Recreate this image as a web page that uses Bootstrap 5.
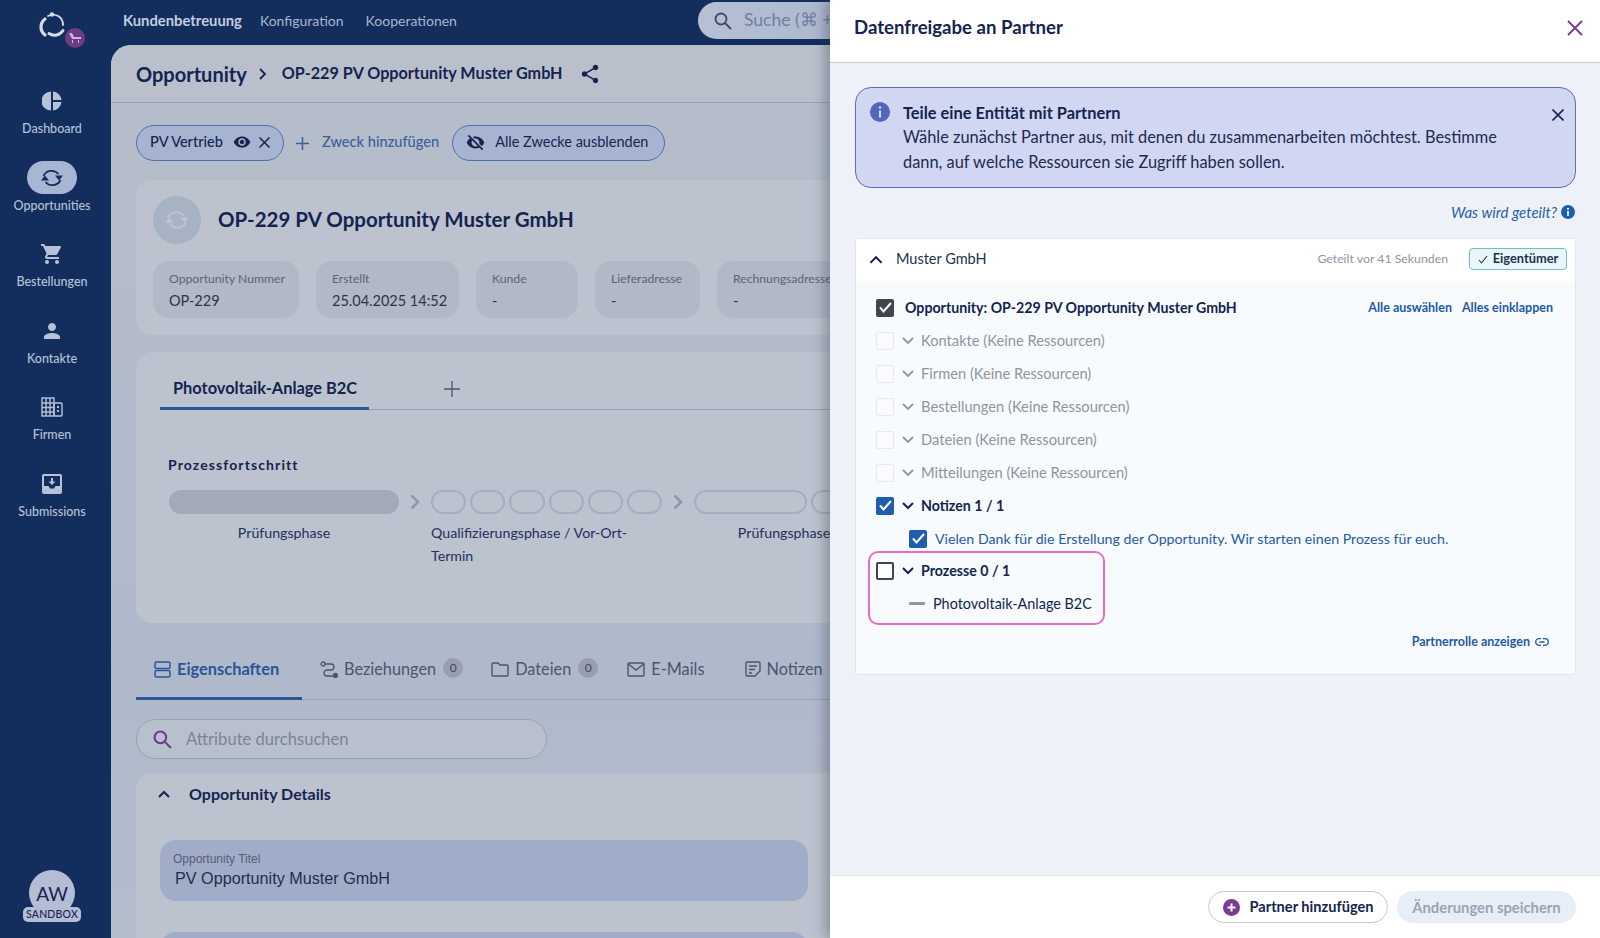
<!DOCTYPE html>
<html lang="de"><head><meta charset="utf-8"><title>Datenfreigabe</title>
<link href="https://cdn.jsdelivr.net/npm/bootstrap@5.3.0/dist/css/bootstrap.min.css" rel="stylesheet">
<style>
html,body{height:100%;overflow:hidden}
body{font-family:"Lato","Liberation Sans",sans-serif;color:#14244f;background:#132e5c;font-size:15px}
.shell{height:938px;position:relative;overflow:hidden}
.side{width:111px;flex:none;background:#132e5c;color:#b7c2d8;height:938px;padding-right:7px}
.logo-wrap{height:84.5px;position:relative}
.logo-wrap svg.lg{position:absolute;left:38px;top:11px}
.logo-dot{position:absolute;left:65px;top:28px;width:20px;height:20px;border-radius:50%;background:#6f3b84;display:flex;align-items:center;justify-content:center}
.side-item{height:76.5px;text-align:center;font-size:12.5px;line-height:16px;font-weight:500;white-space:nowrap}
.side-ic{height:33px;width:50px;margin:0 auto 3.500px;display:flex;align-items:center;justify-content:center;border-radius:17px}
.side-ic.on{background:#a9b6d3;color:#132e5c}
.ava{position:relative;height:52px;margin-bottom:16px}
.ava-c{width:46px;height:46px;border-radius:50%;background:#b3bdd5;margin:0 auto;color:#14244f;font-size:19px;text-align:center;line-height:47px}
.ava-b{position:absolute;left:23px;top:37px;width:58px;height:15px;border-radius:5px;background:#b3bdd5;color:#14244f;font-size:10.500px;line-height:15px;text-align:center;font-weight:500;letter-spacing:.2px}
.topb{height:45px;flex:none;color:#b7c2d8;padding-bottom:5px}
.topb a{text-decoration:none;color:#aab6cd;font-size:14px}
.topb a.act{color:#c3cde0;font-weight:700;font-size:14.8px}
.topb a.k1{margin-left:2px}
.topb a.k2{margin-left:6px}
.srch{margin-left:225px;width:300px;height:37px;margin-top:1px;border-radius:19px;background:linear-gradient(90deg,#b6bfd3,#a3afcb);color:#6f7f9f;font-size:17.6px;padding-left:16px;gap:12px;white-space:nowrap}
.panel{flex:1;min-height:0;background:linear-gradient(#b6bdca,#afb9cb 70%,#b3bccb);border-top-left-radius:20px;overflow:hidden}
.phead{height:58px;background:#b9c0cc;border-bottom:1px solid #98a1b0;padding-left:25px}
.phead .h1x{font-size:20px;font-weight:700;color:#14244f}
.phead .h2x{font-size:16.2px;font-weight:700;color:#14244f}
.crumb{margin:0 10px 0 11px}
.pbody{padding:22px 25px 0}
.chip{height:36px;border:1.5px solid #4d70aa;background:#a6b4d2;border-radius:18px;font-size:14.5px;font-weight:500;white-space:nowrap;padding:0 13px 2px}
.chip2{width:213px;gap:10px;font-weight:400}
.plus2{margin-left:12px}
.addlink{color:#3b5f9a;font-size:14.6px;font-weight:500;white-space:nowrap;margin:-2px 13px 0 13px}
.blk{background:#bcc3cf;border-radius:16px}
.c1{margin-top:19px;height:155px;padding:16px 17px}
.rnd{width:48px;height:48px;border-radius:50%;background:#a7b3c2;color:#bcc6d2;display:flex;align-items:center;justify-content:center}
.ttl{font-size:20.5px;font-weight:700;margin:-2px 0 0 17px;color:#14244f}
.infos{margin-top:17px;gap:17px}
.info{height:57px;background:#b2b8c5;border-radius:16px;padding:9px 16px;flex:none;white-space:nowrap}
.info .l{font-size:12.2px;color:#5b6478;line-height:18px}
.info .v{font-size:14.5px;color:#2a3550;line-height:24px;margin-top:1px}
.c2{margin-top:17px;height:271px;padding:16px 0 0 24px}
.tabrow{border-bottom:1px solid #99a2b1;height:42px}
.tab1{width:209px;padding-left:13px;font-size:16.4px;font-weight:700;height:42px;line-height:40px;border-bottom:3px solid #2c5596;margin-bottom:-1px}
.plusx{margin:13px 0 0 75px}
.procT{font-size:14px;font-weight:700;letter-spacing:1.1px;margin:45px 0 0 -16px;line-height:20px;padding-left:24px}
.steps{margin:15px 0 0 9px;align-items:flex-start}
.pill{height:24px;border-radius:12px;border:2px solid #a6adbb;flex:none}
.pill.flex-fill{flex:1 1 0}
.pill.fill{background:#a2a9b8;border:0}
.stepL{font-size:14.2px;line-height:23px;margin-top:7px;color:#22305a}
.chev{width:32px;flex:none;height:24px;display:flex;align-items:center;justify-content:center;color:#8f97a6}
.tabs2{margin-top:27px;height:50px;border-bottom:1px solid #98a1b1;color:#4b566e;font-size:16.300px;white-space:nowrap}
.tb{height:50px;gap:6px;padding-bottom:11px;flex:none}
.tb.act{width:166px;padding-left:18px;color:#2c5596;font-weight:700;font-size:16.4px;border-bottom:3px solid #2c5596;margin-bottom:-1px;padding-bottom:8px}
.cnt{width:20px;height:20px;border-radius:50%;background:#979fb0;font-size:12px;display:flex;align-items:center;justify-content:center;color:#3d465a;margin:-3px 0 0 1px}
.ser{margin-top:19px;width:411px;height:40px;border:1px solid #99a2b4;border-radius:20px;padding-left:16px;gap:14px;font-size:16.6px;color:#7b8497;background:#b9c0cd}
.c3{margin-top:14px;height:400px;padding:12px 24px 12px 22px}
.c3h{font-size:16px;font-weight:700;gap:19px;height:18px}
.fld{width:648px;height:61px;background:#a1acc8;border-radius:16px;margin:37px 0 0 2px;padding:10px 13px}
.fld .l{font-family:"Liberation Sans",sans-serif;font-size:12px;color:#535e78;line-height:18px}
.fld .v{font-family:"Liberation Sans",sans-serif;font-size:16.2px;color:#222e4e;line-height:20px;padding-left:2px}
.fld2{margin-top:31px}
.draw{position:absolute;right:0;top:0;bottom:0;width:770px;background:#eef2f8;box-shadow:-5px 0 12px rgba(40,50,70,.35)}
.dh{height:63px;background:#fff;border-bottom:1px solid #c8ced8;padding:0 17px 6px 24px;flex:none}
.dh .t{font-size:18.6px;font-weight:700;color:#14244f}
.db{flex:1;padding:24px 24px 0 25px}
.al{height:101px;border:1.5px solid #5d6eb4;background:#d1d7f3;border-radius:16px;padding:12.500px 11px 0 14px;font-size:16.4px;line-height:24.6px;color:#1c2a50}
.al b{font-weight:700;color:#14244f}
.alic{flex:none;margin:1px 13px 0 0}
.alx{flex:none;margin:8px 0 0 24px}
.was{font-style:italic;color:#2a5ea8;font-size:15px;margin-top:14px;height:20px;gap:4px;padding-right:1px}
.pc{margin-top:16px;height:437px;border:1px solid #e1e6ee;border-radius:3px;background:#f8fbfe}
.pch{height:42px;background:#fff;padding:0 8px 2px 13px}
.pch .n{font-size:14.5px;color:#24304f;margin-left:13px}
.pch .g{font-size:12.3px;color:#8d95a3;margin-right:21px}
.own{height:22px;width:98px;border:1px solid #74bccb;border-radius:4px;background:#e8f6fa;font-size:12.8px;font-weight:700;gap:5px;color:#24304f}
.pcb{padding:10px 21px 0 20px}
.rw{height:33px;display:flex;align-items:center;font-size:14.7px;white-space:nowrap}
.cb{width:18px;height:18px;flex:none;border-radius:2px;display:flex;align-items:center;justify-content:center}
.cb.dk{background:#3f4650}
.cb.bl{background:#1e5db0}
.cb.off{background:#fafbfc;border:1.5px solid #e6e9ee}
.cb.emp{background:#fff;border:2px solid #3f4650}
.rw .ar{width:27px;flex:none;display:flex;justify-content:flex-end;padding-right:7px}
.rw.dis{color:#8d95a3}
.rw.on,.strong{font-weight:700;color:#14244f;font-size:14.2px}
.strong{margin-left:11px}
.sub{padding-left:33px;color:#1f5aa3;font-size:14.2px}
.lnk{font-size:12.5px;color:#1f5aa3;font-weight:700}
.lnkrow{margin-top:2px}
.lnkrow.a1{margin-left:auto}
.lnkrow.a2{margin-left:10px;margin-right:1px}
.hl{margin:-4px 0 -4px -8px;width:237px;height:74px;border:2px solid #e96bc5;border-radius:10px;padding:1px 0 0 6px}
.hl .pv{font-size:14.4px}
.dsh{width:16px;height:3px;background:#8d97a6;margin:0 8px 0 33px;border-radius:1px;flex:none}
.prol{margin-top:11px;padding-right:5px;height:20px;gap:5px}
.df{height:63px;background:#fff;border-top:1px solid #e3e7ee;padding:0 24px 0 0;gap:9px;flex:none}
.bt1{height:32px;width:180px;border:1px solid #c5cad2;border-radius:16px;font-size:14.6px;font-weight:700;gap:10px;color:#14244f;background:#fff;padding:0}
.bt2{height:32px;width:179px;border-radius:16px;font-size:14.8px;font-weight:700;color:#9aa3b5;background:#e8eef7;border:0;padding:0}
</style></head>
<body>
<div class="shell d-flex">
 <aside class="side d-flex flex-column">
  <div class="logo-wrap">
   <svg class="lg" width="29" height="28" viewBox="0 0 29 28" fill="none" stroke="#d5dbe8" stroke-linecap="round"><path d="M10 5A10 10 0 0 1 25 14" stroke-width="1.800"/><path d="M7 8A10 10 0 0 0 7 24" stroke-width="3.200"/><path d="M11 22.500a10 10 0 0 0 14-3" stroke-width="3"/><circle cx="14" cy="3.500" r="2.200" fill="#d5dbe8" stroke="none"/></svg>
   <div class="logo-dot"><svg width="14" height="12" viewBox="0 0 14 12" fill="#c8b6d4"><path d="M1 1h3l2 4h7v2H4zM4 8h1v3H4zM10 8h1v3h-1z"/></svg></div>
  </div>
  <div class="side-item"><div class="side-ic"><svg width="20" height="20" viewBox="0 0 20 20" fill="currentColor"><path d="M9 .5v19A9.500 9.500 0 0 1 9 .5zM11 .5A9.500 9.500 0 0 1 19.500 9H11zM11 11h8.500A9.500 9.500 0 0 1 11 19.500z"/></svg></div>Dashboard</div>
  <div class="side-item"><div class="side-ic on"><svg width="24" height="20" viewBox="0 0 24 20" fill="none" stroke="currentColor" stroke-width="1.800"><path d="M3.500 8A9 9 0 0 1 18.500 6"/><path d="M20.500 12A9 9 0 0 1 5.500 14"/><path d="M15 7.500h8l-4 5zM1 12.500h8l-4-5z" fill="currentColor" stroke="none"/></svg></div>Opportunities</div>
  <div class="side-item"><div class="side-ic"><svg width="24" height="24" viewBox="0 0 24 24" fill="currentColor"><path d="M7 18c-1.100 0-1.990.9-1.990 2S5.900 22 7 22s2-.9 2-2-.9-2-2-2zM1 2v2h2l3.600 7.590-1.350 2.450c-.16.28-.25.61-.25.96 0 1.100.9 2 2 2h12v-2H7.420c-.14 0-.25-.11-.25-.25l.03-.12.9-1.630h7.450c.75 0 1.410-.41 1.750-1.030l3.580-6.490c.08-.14.12-.31.12-.48 0-.55-.45-1-1-1H5.210l-.94-2H1zm16 16c-1.100 0-1.990.9-1.990 2s.89 2 1.990 2 2-.9 2-2-.9-2-2-2z"/></svg></div>Bestellungen</div>
  <div class="side-item"><div class="side-ic"><svg width="24" height="24" viewBox="0 0 24 24" fill="currentColor"><path d="M12 12c2.210 0 4-1.790 4-4s-1.790-4-4-4-4 1.790-4 4 1.790 4 4 4zm0 2c-2.670 0-8 1.340-8 4v2h16v-2c0-2.660-5.330-4-8-4z"/></svg></div>Kontakte</div>
  <div class="side-item"><div class="side-ic"><svg width="22" height="20" viewBox="0 0 22 20" fill="none" stroke="currentColor" stroke-width="1.400"><rect x="1" y="1" width="12" height="18"/><rect x="13" y="6" width="8" height="13" rx="1"/><path d="M1 6h12M1 10.500h12M1 15h12M5 1v18M9 1v18"/><path d="M16 10h2M16 14h2" stroke-width="2"/></svg></div>Firmen</div>
  <div class="side-item"><div class="side-ic"><svg width="20" height="20" viewBox="0 0 20 20"><path fill="currentColor" d="M2 0h16a2 2 0 0 1 2 2v16a2 2 0 0 1-2 2H2a2 2 0 0 1-2-2V2a2 2 0 0 1 2-2z"/><path fill="#132e5c" d="M2 2h16v10h-4.500l-1.500 2.500H8L6.500 12H2z"/><path fill="currentColor" d="M9 4h2v3.500h2.500L10 11 6.500 7.500H9z"/></svg></div>Submissions</div>
  <div class="ava mt-auto"><div class="ava-c">AW</div><div class="ava-b">SANDBOX</div></div>
 </aside>
 <div class="flex-grow-1 d-flex flex-column" style="min-width:0">
  <div class="topb d-flex align-items-center ps-2 gap-3">
    <a class="act ms-1" href="#">Kundenbetreuung</a><a href="#" class="k1">Konfiguration</a><a href="#" class="k2">Kooperationen</a>
    <div class="srch d-flex align-items-center"><svg width="18" height="18" viewBox="0 0 18 18" fill="none" stroke="#3a4a6c" stroke-width="1.800"><circle cx="7" cy="7" r="5.500"/><path d="M11 11l6 6"/></svg><span>Suche (⌘ +</span></div>
  </div>
  <main class="panel">
   <div class="phead d-flex align-items-center"><span class="h1x">Opportunity</span><svg class="crumb" width="10" height="12" viewBox="0 0 10 12" fill="none" stroke="#14244f" stroke-width="1.800"><path d="M2 1l5 5-5 5"/></svg><span class="h2x ms-1">OP-229 PV Opportunity Muster GmbH</span><svg class="ms-3" width="22" height="22" viewBox="0 0 24 24" fill="#14244f"><path d="M18 16.080c-.76 0-1.440.3-1.960.77L8.910 12.700c.05-.23.09-.46.09-.7s-.04-.47-.09-.7l7.050-4.110c.54.5 1.250.81 2.040.81 1.660 0 3-1.340 3-3s-1.340-3-3-3-3 1.340-3 3c0 .24.04.47.09.7L8.040 9.810C7.500 9.310 6.790 9 6 9c-1.660 0-3 1.340-3 3s1.340 3 3 3c.79 0 1.500-.31 2.040-.81l7.120 4.160c-.05.21-.08.43-.08.65 0 1.610 1.310 2.920 2.920 2.920 1.610 0 2.920-1.310 2.920-2.920s-1.310-2.920-2.920-2.920z"/></svg></div>
   <div class="pbody">
    <div class="d-flex align-items-center">
     <div class="chip d-flex align-items-center" style="width:148px">PV Vertrieb<svg class="ms-auto" width="18" height="18" viewBox="0 0 24 24" fill="#14244f"><path d="M12 4.500C7 4.500 2.730 7.610 1 12c1.730 4.390 6 7.500 11 7.500s9.270-3.110 11-7.500c-1.730-4.390-6-7.500-11-7.500zM12 17c-2.760 0-5-2.240-5-5s2.240-5 5-5 5 2.240 5 5-2.240 5-5 5zm0-8c-1.660 0-3 1.340-3 3s1.340 3 3 3 3-1.340 3-3-1.340-3-3-3z"/></svg><svg class="ms-2" width="11" height="11" viewBox="0 0 11 11" stroke="#14244f" stroke-width="1.500"><path d="M.5.5l10 10M10.500.5l-10 10"/></svg></div>
     <svg class="plus2" width="13" height="13" viewBox="0 0 13 13" stroke="#3b5f9a" stroke-width="1.500"><path d="M6.500 0v13M0 6.500h13"/></svg>
     <span class="addlink">Zweck hinzufügen</span>
     <div class="chip chip2 d-flex align-items-center"><svg width="19" height="19" viewBox="0 0 24 24" fill="#14244f"><path d="M12 4.500C7 4.500 2.730 7.610 1 12c1.730 4.390 6 7.500 11 7.500s9.270-3.110 11-7.500c-1.730-4.390-6-7.500-11-7.500zM12 17c-2.760 0-5-2.240-5-5s2.240-5 5-5 5 2.240 5 5-2.240 5-5 5z"/><path d="M3 2l19 19" stroke="#a6b4d2" stroke-width="3.500"/><path d="M3 3l18 18" stroke="#14244f" stroke-width="2"/></svg>Alle Zwecke ausblenden</div>
    </div>
    <section class="blk c1">
     <div class="d-flex align-items-center"><div class="rnd"><svg width="26" height="22" viewBox="0 0 24 20" fill="none" stroke="currentColor" stroke-width="1.800"><path d="M3.500 8A9 9 0 0 1 18.500 6"/><path d="M20.500 12A9 9 0 0 1 5.500 14"/><path d="M15 7.500h8l-4 5zM1 12.500h8l-4-5z" fill="currentColor" stroke="none"/></svg></div><div class="ttl">OP-229 PV Opportunity Muster GmbH</div></div>
     <div class="infos d-flex">
      <div class="info" style="width:146px"><div class="l">Opportunity Nummer</div><div class="v">OP-229</div></div>
      <div class="info" style="width:143px"><div class="l">Erstellt</div><div class="v">25.04.2025 14:52</div></div>
      <div class="info" style="width:102px"><div class="l">Kunde</div><div class="v">-</div></div>
      <div class="info" style="width:105px"><div class="l">Lieferadresse</div><div class="v">-</div></div>
      <div class="info" style="width:150px"><div class="l">Rechnungsadresse</div><div class="v">-</div></div>
     </div>
    </section>
    <section class="blk c2">
     <div class="tabrow d-flex"><div class="tab1">Photovoltaik-Anlage B2C</div><svg class="plusx" width="16" height="16" viewBox="0 0 16 16" stroke="#4b566e" stroke-width="1.300"><path d="M8 0v16M0 8h16"/></svg></div>
     <div class="procT">Prozessfortschritt</div>
     <div class="steps d-flex">
      <div style="width:230px"><div class="pill fill"></div><div class="stepL text-center">Prüfungsphase</div></div>
      <div class="chev"><svg width="10" height="16" viewBox="0 0 10 16" fill="none" stroke="currentColor" stroke-width="2.500"><path d="M1.500 1.500L8 8l-6.500 6.500"/></svg></div>
      <div style="width:231px"><div class="d-flex gap-1"><div class="pill flex-fill"></div><div class="pill flex-fill"></div><div class="pill flex-fill"></div><div class="pill flex-fill"></div><div class="pill flex-fill"></div><div class="pill flex-fill"></div></div><div class="stepL">Qualifizierungsphase / Vor-Ort-Termin</div></div>
      <div class="chev"><svg width="10" height="16" viewBox="0 0 10 16" fill="none" stroke="currentColor" stroke-width="2.500"><path d="M1.500 1.500L8 8l-6.500 6.500"/></svg></div>
      <div style="width:180px"><div class="d-flex gap-1"><div class="pill" style="width:113px"></div><div class="pill" style="width:80px"></div></div><div class="stepL text-center">Prüfungsphase</div></div>
     </div>
    </section>
    <div class="tabs2 d-flex align-items-center">
     <div class="tb act d-flex align-items-center"><svg width="17" height="17" viewBox="0 0 17 17" fill="none" stroke="#2c5596" stroke-width="1.500"><rect x="1" y="1" width="15" height="6.500" rx="1.500"/><rect x="1" y="9.500" width="15" height="6.500" rx="1.500"/></svg>Eigenschaften</div>
     <div class="tb d-flex align-items-center" style="margin-left:18px"><svg width="18" height="17" viewBox="0 0 18 17" fill="none" stroke="#4b566e" stroke-width="1.300"><circle cx="3" cy="3" r="2"/><path d="M5 3h6a3 3 0 0 1 0 6H7a3 3 0 0 0 0 6h7"/><circle cx="15.500" cy="14.500" r="2" fill="#4b566e"/></svg>Beziehungen<div class="cnt">0</div></div>
     <div class="tb d-flex align-items-center" style="margin-left:28px"><svg width="18" height="16" viewBox="0 0 18 16" fill="none" stroke="#4b566e" stroke-width="1.400"><path d="M1 3a1 1 0 0 1 1-1h5l2 2h7a1 1 0 0 1 1 1v9a1 1 0 0 1-1 1H2a1 1 0 0 1-1-1z"/></svg>Dateien<div class="cnt">0</div></div>
     <div class="tb d-flex align-items-center" style="margin-left:29px"><svg width="18" height="15" viewBox="0 0 18 15" fill="none" stroke="#4b566e" stroke-width="1.400"><rect x="1" y="1" width="16" height="13" rx="1"/><path d="M1.500 2l7.500 6 7.500-6"/></svg>E-Mails</div>
     <div class="tb d-flex align-items-center" style="margin-left:40px"><svg width="16" height="16" viewBox="0 0 16 16" fill="none" stroke="#4b566e" stroke-width="1.400"><path d="M2 1h12a1 1 0 0 1 1 1v8l-5 5H2a1 1 0 0 1-1-1V2a1 1 0 0 1 1-1zM4 5h8M4 8.500h6M4 12h3"/></svg>Notizen<div class="cnt"></div></div>
    </div>
    <div class="ser d-flex align-items-center"><svg width="19" height="19" viewBox="0 0 18 18" fill="none" stroke="#6b3a88" stroke-width="1.900"><circle cx="7" cy="7" r="5.500"/><path d="M11 11l6 6"/></svg>Attribute durchsuchen</div>
    <section class="blk c3">
     <div class="c3h d-flex align-items-center"><svg width="12" height="8" viewBox="0 0 12 8" fill="none" stroke="#14244f" stroke-width="2"><path d="M1 7l5-5 5 5"/></svg>Opportunity Details</div>
     <div class="fld"><div class="l">Opportunity Titel</div><div class="v">PV Opportunity Muster GmbH</div></div>
     <div class="fld fld2"></div>
    </section>
   </div>
  </main>
 </div>
 <aside class="draw d-flex flex-column">
  <div class="dh d-flex align-items-center justify-content-between"><span class="t">Datenfreigabe an Partner</span><svg width="16" height="16" viewBox="0 0 16 16" stroke="#7b3a8e" stroke-width="1.800"><path d="M1 1l14 14M15 1L1 15"/></svg></div>
  <div class="db">
   <div class="al d-flex">
    <svg class="alic" width="20" height="20" viewBox="0 0 20 20"><circle cx="10" cy="10" r="10" fill="#5068b5"/><circle cx="10" cy="5.500" r="1.300" fill="#d1d7f3"/><rect x="9" y="8.500" width="2" height="7" fill="#d1d7f3"/></svg>
    <div class="flex-grow-1"><b>Teile eine Entität mit Partnern</b><br>Wähle zunächst Partner aus, mit denen du zusammenarbeiten möchtest. Bestimme dann, auf welche Ressourcen sie Zugriff haben sollen.</div>
    <svg class="alx" width="12" height="12" viewBox="0 0 12 12" stroke="#14244f" stroke-width="1.600"><path d="M.5.5l11 11M11.500.5l-11 11"/></svg>
   </div>
   <div class="was d-flex align-items-center justify-content-end">Was wird geteilt?<svg width="14" height="14" viewBox="0 0 20 20"><circle cx="10" cy="10" r="10" fill="#1e5db0"/><circle cx="10" cy="5.500" r="1.500" fill="#fff"/><rect x="8.800" y="8.500" width="2.400" height="7" fill="#fff"/></svg></div>
   <div class="pc">
    <div class="pch d-flex align-items-center"><svg width="14" height="9" viewBox="0 0 12 8" fill="none" stroke="#14244f" stroke-width="1.800"><path d="M1 7l5-5 5 5"/></svg><span class="n">Muster GmbH</span><span class="g ms-auto">Geteilt vor 41 Sekunden</span><div class="own d-flex align-items-center justify-content-center"><svg width="10" height="9" viewBox="0 0 10 9" fill="none" stroke="#24304f" stroke-width="1.100"><path d="M1 5l2.500 3L9 1"/></svg>Eigentümer</div></div>
    <div class="pcb">
     <div class="rw"><span class="cb dk"><svg width="13" height="11" viewBox="0 0 13 11" fill="none" stroke="#fff" stroke-width="2"><path d="M1 5.500l3.500 4L12 1"/></svg></span><span class="strong">Opportunity: OP-229 PV Opportunity Muster GmbH</span><a class="lnk lnkrow a1 text-decoration-none" href="#">Alle auswählen</a><a class="lnk lnkrow a2 text-decoration-none" href="#">Alles einklappen</a></div>
     <div class="rw dis"><span class="cb off"></span><span class="ar"><svg width="12" height="8" viewBox="0 0 12 8" fill="none" stroke="#8d95a3" stroke-width="1.800"><path d="M1 1l5 5 5-5"/></svg></span>Kontakte (Keine Ressourcen)</div>
     <div class="rw dis"><span class="cb off"></span><span class="ar"><svg width="12" height="8" viewBox="0 0 12 8" fill="none" stroke="#8d95a3" stroke-width="1.800"><path d="M1 1l5 5 5-5"/></svg></span>Firmen (Keine Ressourcen)</div>
     <div class="rw dis"><span class="cb off"></span><span class="ar"><svg width="12" height="8" viewBox="0 0 12 8" fill="none" stroke="#8d95a3" stroke-width="1.800"><path d="M1 1l5 5 5-5"/></svg></span>Bestellungen (Keine Ressourcen)</div>
     <div class="rw dis"><span class="cb off"></span><span class="ar"><svg width="12" height="8" viewBox="0 0 12 8" fill="none" stroke="#8d95a3" stroke-width="1.800"><path d="M1 1l5 5 5-5"/></svg></span>Dateien (Keine Ressourcen)</div>
     <div class="rw dis"><span class="cb off"></span><span class="ar"><svg width="12" height="8" viewBox="0 0 12 8" fill="none" stroke="#8d95a3" stroke-width="1.800"><path d="M1 1l5 5 5-5"/></svg></span>Mitteilungen (Keine Ressourcen)</div>
     <div class="rw on"><span class="cb bl"><svg width="13" height="11" viewBox="0 0 13 11" fill="none" stroke="#fff" stroke-width="2"><path d="M1 5.500l3.500 4L12 1"/></svg></span><span class="ar"><svg width="12" height="8" viewBox="0 0 12 8" fill="none" stroke="#14244f" stroke-width="2"><path d="M1 1l5 5 5-5"/></svg></span>Notizen 1 / 1</div>
     <div class="rw sub"><span class="cb bl me-2"><svg width="13" height="11" viewBox="0 0 13 11" fill="none" stroke="#fff" stroke-width="2"><path d="M1 5.500l3.500 4L12 1"/></svg></span>Vielen Dank für die Erstellung der Opportunity. Wir starten einen Prozess für euch.</div>
     <div class="hl">
      <div class="rw on"><span class="cb emp"></span><span class="ar"><svg width="12" height="8" viewBox="0 0 12 8" fill="none" stroke="#14244f" stroke-width="2"><path d="M1 1l5 5 5-5"/></svg></span>Prozesse 0 / 1</div>
      <div class="rw pv"><span class="dsh"></span>Photovoltaik-Anlage B2C</div>
     </div>
     <div class="prol d-flex align-items-center justify-content-end"><a class="lnk text-decoration-none" href="#">Partnerrolle anzeigen</a><svg width="14" height="8" viewBox="0 0 14 8" fill="none" stroke="#1f5aa3" stroke-width="1.300"><path d="M6 .7H4a3.300 3.300 0 0 0 0 6.600h2M8 .7h2a3.300 3.300 0 0 1 0 6.600H8M4.500 4h5"/></svg></div>
    </div>
   </div>
  </div>
  <div class="df d-flex align-items-center justify-content-end">
   <button class="btn bt1 d-flex align-items-center justify-content-center"><svg width="17" height="17" viewBox="0 0 17 17"><circle cx="8.500" cy="8.500" r="8.500" fill="#7b3a93"/><path d="M8.500 4.500v8M4.500 8.500h8" stroke="#fff" stroke-width="2"/></svg>Partner hinzufügen</button>
   <button class="btn bt2">Änderungen speichern</button>
  </div>
 </aside>
</div>
<script src="https://cdn.jsdelivr.net/npm/bootstrap@5.3.0/dist/js/bootstrap.bundle.min.js"></script>
</body></html>
